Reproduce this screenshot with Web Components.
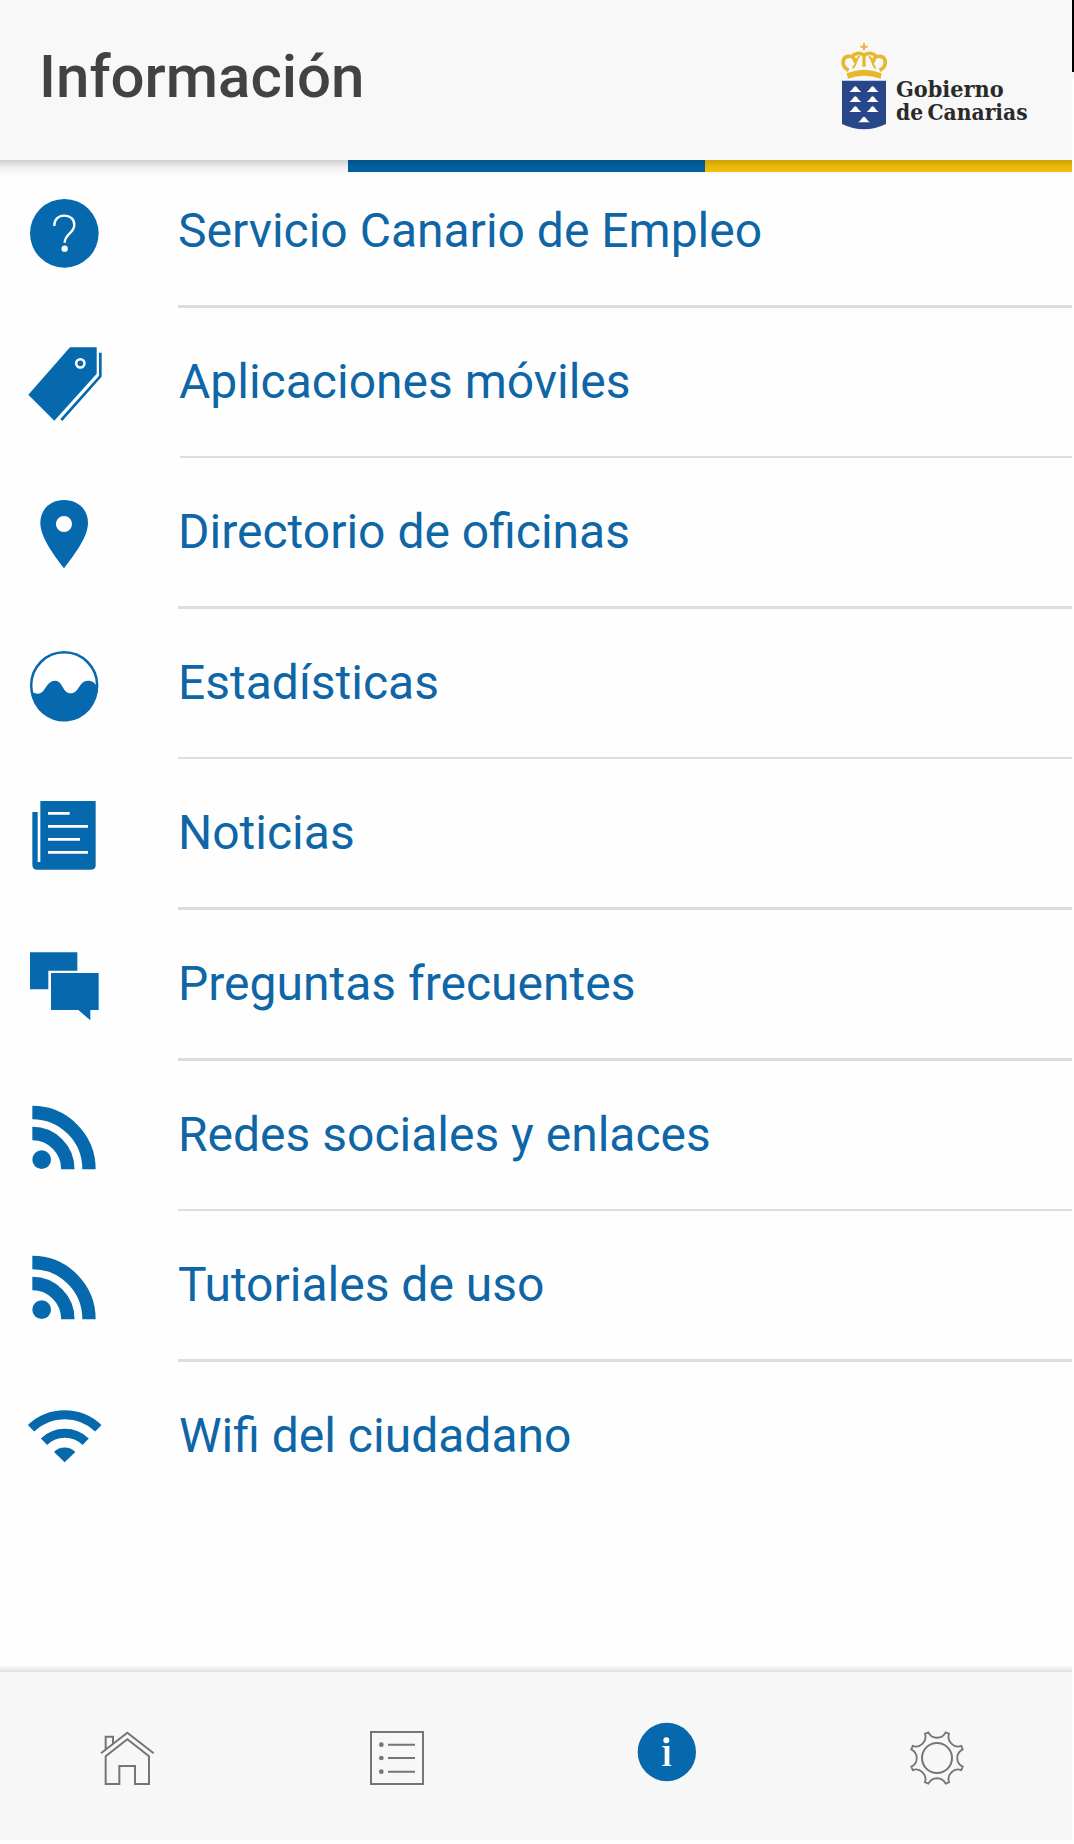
<!DOCTYPE html>
<html lang="es">
<head>
<meta charset="utf-8">
<title>Información</title>
<style>
html,body{margin:0;padding:0;background:#fefefe}
body{width:1074px;height:1844px;overflow:hidden;font-family:Roboto,"Liberation Sans",sans-serif}
</style>
</head>
<body>
<info-app></info-app>
<script>
const define=(name,html)=>customElements.define(name,class extends HTMLElement{
  connectedCallback(){
    if(this.shadowRoot)return;
    const t=document.createElement('template');
    t.innerHTML=typeof html==='function'?html(this):html;
    this.attachShadow({mode:'open'}).append(t.content.cloneNode(true));
  }
});

/* Cog outline: eight concave scallops joined by short flat teeth. */
function cog(cx,cy){
  let d='';
  for(let k=0;k<8;k++){
    const a=k*Math.PI/4,c=Math.cos(a),s=Math.sin(a);
    const p=(x,y)=>(cx+x*c-y*s).toFixed(1)+' '+(cy+x*s+y*c).toFixed(1);
    d+=(k?'L':'M')+p(-26,-77)+'A29 29 0 0 0 '+p(26,-77);
  }
  return d+'Z';
}

const rowIcons={
  help:['0 -60 420 435','<circle cx="193" cy="160" r="103"/><path d="M163 138C162 118 175 107 193 107C211 107 223 118 223 134C223 160 195 160 194 188" fill="none" stroke="#fff" stroke-width="7"/><circle cx="194" cy="206" r="9.5" fill="#fff"/>'],
  tag:['0 384 420 444','<path d="M210 502H290V581L163 722L85 644Z"/><path d="M301 518V589L184 720" fill="none" stroke="currentColor" stroke-width="8"/><circle cx="241" cy="550" r="12.5" fill="none" stroke="#fff" stroke-width="7.5"/>'],
  pin:['0 -66 420 444','<path fill-rule="evenodd" d="M192 60C150 60 121 89 121 128C121 170 158 220 192 265C226 220 264 170 264 128C264 89 235 60 192 60ZM192 108A24 24 0 1 1 191.900 108Z"/>'],
  chart:['0 387 420 444','<circle cx="192.500" cy="616" r="99" fill="#fff" stroke="currentColor" stroke-width="7.500"/><path d="M92 632C104 641 118 646 129 634C140 620 146 602 166 602C188 602 188 640 212 640C238 640 236 602 264 602C278 602 286 610 290 618L293 616A100.500 100.500 0 0 1 92 632Z"/>'],
  news:['0 -63 420 444','<path d="M121 63H287V256Q287 269 274 269H112Q97 269 97 254V96H113V246H121Z"/><path d="M144 100H209M144 139H264M144 178H240M144 217H264" stroke="#fff" stroke-width="8"/>'],
  chat:['0 390 420 444','<path d="M90 517H232V572H145V628H90Z"/><path d="M153 579H296V690H271V721L235 690H153Z"/>'],
  feed:['0 -57 420 444','<circle cx="125" cy="239" r="28"/><path d="M97 97.500A170 170 0 0 1 267 267.500M97 160.500A106.500 106.500 0 0 1 203.500 267.500" fill="none" stroke="currentColor" stroke-width="40"/>'],
  wifi:['0 -54 420 444','<path d="M93 145A146 146 0 0 1 295 145M132 185A90 90 0 0 1 257 185" fill="none" stroke="currentColor" stroke-width="27"/><path d="M162 216A44 44 0 0 1 226 216L194 247Z"/>']
};

const navIcons={
  home:['111 66 180 504','<path d="M123 310L202 248L281 310M137 297V260H159V281M137 319V402H178V348H225V402H267V319L202 268Z"/>'],
  list:['921 66 180 504','<path d="M933 246H1089V402H933ZM984 284.500H1065M984 324H1065M984 365.500H1065"/><g fill="#757575" stroke="none"><circle cx="964" cy="284" r="7"/><circle cx="964" cy="324" r="7"/><circle cx="964" cy="365" r="7"/></g>'],
  info:['111 66 180 504','<circle cx="200.500" cy="306" r="87.500" fill="#0769ad" stroke="none"/><g fill="#fff" stroke="none"><circle cx="199" cy="271" r="9"/><path d="M187 288H208V344L214 345V348H187V345L194 344V293L187 291Z"/></g>'],
  gear:['921 66 180 504','<path d="'+cog(1011,324)+'" stroke-width="5.500"/><circle cx="1011" cy="324" r="45"/>']
};

define('gov-logo',`<style>:host{display:block;width:200px;height:100px}svg{display:block}</style>
<svg width="200" height="100" viewBox="60 30 600 300">
<g fill="none" stroke="#e6b82e" stroke-width="11">
<path d="M132 40V61M121 50H143" stroke-width="6"/>
<path d="M86 121C62 108 66 82 84 79C98 77 106 86 105 98M179 121C203 108 199 82 181 79C167 77 159 86 160 98M96 80C104 68 120 68 132 75M169 80C161 68 145 68 132 75"/>
<path d="M132 72V110" stroke-width="10"/>
<path d="M98 115C111 104 105 90 118 78M167 115C154 104 160 90 147 78" stroke-width="6"/>
</g>
<path d="M80 130Q132 108 185 130L182 146Q132 129 84 146Z" fill="#e6b82e"/>
<path d="M66 152H198V282Q132 314 66 282Z" fill="#27478a"/>
<g fill="#fff"><path id="m" d="M88 186Q95 182 99 175Q106 163 113 175Q117 182 124 186Z"/><use href="#m" x="52"/><use href="#m" y="30"/><use href="#m" x="52" y="30"/><use href="#m" y="60"/><use href="#m" x="52" y="60"/><use href="#m" x="26" y="91"/></g>
<g fill="#2a2a2a" font-family="'DejaVu Serif Condensed','DejaVu Serif',serif" font-weight="700" font-size="66">
<text x="228" y="201" textLength="323" lengthAdjust="spacingAndGlyphs">Gobierno</text>
<text x="228" y="270" textLength="395" lengthAdjust="spacingAndGlyphs" word-spacing="-8">de Canarias</text></g>
</svg>`);

define('app-header',`<style>
:host{display:flex;flex-direction:column;position:relative;width:1072px}
.bar{height:160px;background:#f8f8f8;display:flex;justify-content:space-between;align-items:flex-start;box-sizing:border-box;padding:40px 32px 0 39px}
h1{margin:0;font-weight:500;font-size:60px;line-height:74px;color:#424242;white-space:nowrap}
.stripe{display:flex;height:12px;padding-left:348px}
.b{width:357px;background:#0065a8}.y{flex:1;background:#fac60a}
.shade{position:absolute;left:0;right:0;top:160px;height:15px;background:linear-gradient(rgba(0,0,0,.18),rgba(0,0,0,.06) 50%,rgba(0,0,0,.005))}
</style><div class="bar"><h1><slot></slot></h1><gov-logo></gov-logo></div>
<div class="stripe"><div class="b"></div><div class="y"></div></div><div class="shade"></div>`);

define('info-row',el=>{
  const [vb,art]=rowIcons[el.getAttribute('icon')];
  const h=+vb.split(' ')[3]/3;
  return `<style>
:host{display:flex;color:#0769ad;box-sizing:border-box;height:var(--h,150px)}
.icon{width:var(--start,178px);flex:none}
svg{display:block;fill:currentColor}
.label{flex:1;box-sizing:border-box;border-bottom:var(--line,3px) solid #ddd;padding-top:var(--pad,44px);font-size:48px;line-height:60px;color:#0e66a6;white-space:nowrap;text-indent:var(--in,0)}
</style><div class="icon"><svg width="140" height="${h}" viewBox="${vb}">${art}</svg></div><div class="label"><slot></slot></div>`});

define('nav-icon',el=>{
  const [vb,art]=navIcons[el.getAttribute('name')];
  return `<style>:host{display:block}svg{display:block;fill:none;stroke:#757575;stroke-width:6}</style><svg width="60" height="168" viewBox="${vb}">${art}</svg>`});

define('tab-bar',`<style>
:host{display:block;width:1072px}
.edge{height:6px;background:linear-gradient(#f6f6f6,#eee 55%,#ddd)}
nav{display:flex;justify-content:space-between;box-sizing:border-box;height:168px;padding:0 105px 0 97px;background:#f7f7f7}
</style><div class="edge"></div><nav><slot></slot></nav>`);

define('info-app',`<style>
:host{display:flex;width:1074px;height:1844px}
main{display:flex;flex-direction:column;width:1072px;height:1840px}
.list{flex:1;margin-top:-12px}
app-header{z-index:1}
.side{width:2px;background:linear-gradient(#000 72px,#f8f8f8 72px 79px,#fefefe 79px)}
</style>
<main><app-header>Información</app-header>
<section class="list">
<info-row icon="help" style="--h:148px;--pad:41px">Servicio Canario de Empleo</info-row>
<info-row icon="tag" style="--line:2px;--start:180px;--in:-1px">Aplicaciones móviles</info-row>
<info-row icon="pin" style="--h:151px">Directorio de oficinas</info-row>
<info-row icon="chart" style="--line:2px">Estadísticas</info-row>
<info-row icon="news" style="--h:151px">Noticias</info-row>
<info-row icon="chat" style="--h:151px">Preguntas frecuentes</info-row>
<info-row icon="feed" style="--line:2px">Redes sociales y enlaces</info-row>
<info-row icon="feed" style="--h:151px">Tutoriales de uso</info-row>
<info-row icon="wifi" style="--line:0px;--start:180px;--in:-1px">Wifi del ciudadano</info-row>
</section>
<tab-bar><nav-icon name="home"></nav-icon><nav-icon name="list"></nav-icon><nav-icon name="info"></nav-icon><nav-icon name="gear"></nav-icon></tab-bar></main>
<div class="side"></div>`);
</script>
</body>
</html>
